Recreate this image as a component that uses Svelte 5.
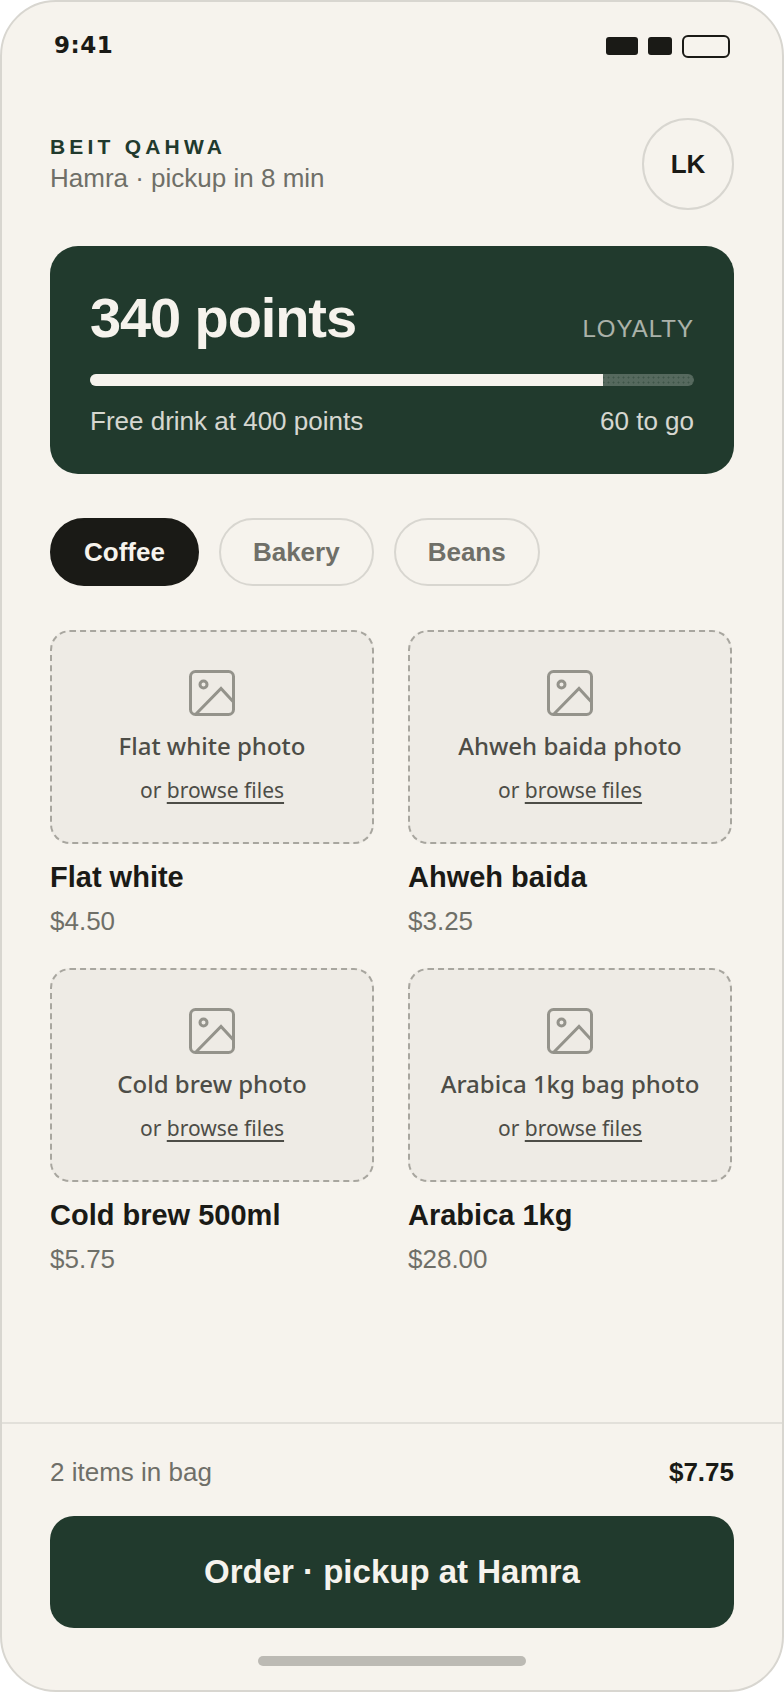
<script lang="ts">
  const tabs = ["Coffee", "Bakery", "Beans"];
  const items = [
    { name: "Flat white", price: "$4.50", photo: "Flat white photo" },
    { name: "Ahweh baida", price: "$3.25", photo: "Ahweh baida photo" },
    { name: "Cold brew 500ml", price: "$5.75", photo: "Cold brew photo" },
    { name: "Arabica 1kg", price: "$28.00", photo: "Arabica 1kg bag photo" },
  ];
  let active = $state("Coffee");
</script>

<div class="phone">
  <div class="status">
    <span class="time">9:41</span>
    <div class="signals">
      <span class="sig wide"></span>
      <span class="sig"></span>
      <span class="battery"></span>
    </div>
  </div>

  <header class="top">
    <div>
      <div class="brand">BEIT QAHWA</div>
      <div class="where">Hamra · pickup in 8 min</div>
    </div>
    <div class="avatar">LK</div>
  </header>

  <section class="loyalty">
    <div class="loyalty-head">
      <span class="points">340 points</span>
      <span class="tag">LOYALTY</span>
    </div>
    <div class="track"><div class="fill" style="width: {(340 / 400) * 100}%"></div></div>
    <div class="loyalty-foot">
      <span>Free drink at 400 points</span>
      <span>60 to go</span>
    </div>
  </section>

  <nav class="tabs">
    {#each tabs as tab}
      <button class="tab" class:active={active === tab} onclick={() => (active = tab)}>{tab}</button>
    {/each}
  </nav>

  <div class="grid">
    {#each items as item}
      <article class="item">
        <div class="drop">
          <svg class="drop-icon" viewBox="0 0 46 46" fill="none" stroke="currentColor" stroke-width="3" aria-hidden="true">
            <rect x="1.5" y="1.5" width="43" height="43" rx="5" />
            <circle cx="14.5" cy="14.5" r="3.5" />
            <path d="M44.5 32 32 18.5 6.5 44.5" />
          </svg>
          <div class="drop-label">{item.photo}</div>
          <div class="drop-sub">or <span class="browse">browse files</span></div>
        </div>
        <div class="item-name">{item.name}</div>
        <div class="item-price">{item.price}</div>
      </article>
    {/each}
  </div>

  <footer class="bag">
    <div class="bag-row">
      <span class="bag-count">2 items in bag</span>
      <span class="bag-total">$7.75</span>
    </div>
    <button class="order">Order · pickup at Hamra</button>
    <div class="home"></div>
  </footer>
</div>

<style>
  :global(body) {
    margin: 0;
    background: #fff;
  }

  .phone {
    box-sizing: border-box;
    width: 784px;
    height: 1692px;
    display: flex;
    flex-direction: column;
    background: #f6f3ed;
    border: 2px solid #d8d6d0;
    border-radius: 56px;
    overflow: hidden;
    font-family: "Liberation Sans", Arial, sans-serif;
    color: #1a1a16;
  }

  .status {
    display: flex;
    justify-content: space-between;
    align-items: center;
    height: 24px;
    padding: 32px 52px 0;
  }

  .time {
    font-size: 25px;
    font-weight: 700;
    letter-spacing: 0.5px;
    font-family: "DejaVu Sans", sans-serif;
    font-size: 23px;
    margin-top: -2px;
  }

  .signals {
    display: flex;
    align-items: center;
    gap: 10px;
  }

  .sig {
    width: 24px;
    height: 18px;
    border-radius: 3px;
    background: #1a1a16;
  }

  .sig.wide {
    width: 32px;
  }

  .battery {
    box-sizing: border-box;
    width: 48px;
    height: 23px;
    border: 2px solid #1a1a16;
    border-radius: 6px;
  }

  .top {
    display: flex;
    justify-content: space-between;
    align-items: center;
    padding: 60px 48px 0;
  }

  .brand {
    font-size: 21px;
    font-weight: 700;
    letter-spacing: 4.2px;
    color: #213a2d;
    line-height: 28px;
  }

  .where {
    font-size: 26px;
    color: #6f6f68;
    line-height: 34px;
  }

  .avatar {
    box-sizing: border-box;
    width: 92px;
    height: 92px;
    display: flex;
    align-items: center;
    justify-content: center;
    border: 2px solid #d8d6d0;
    border-radius: 50%;
    font-size: 26px;
    font-weight: 700;
  }

  .loyalty {
    margin: 36px 48px 0;
    padding: 40px 40px 36px;
    background: #213a2d;
    border-radius: 28px;
    color: #f6f3ed;
  }

  .loyalty-head {
    display: flex;
    justify-content: space-between;
    align-items: baseline;
  }

  .points {
    font-size: 56px;
    font-weight: 700;
    letter-spacing: -1.1px;
    line-height: 64px;
  }

  .tag {
    font-size: 24px;
    letter-spacing: 1px;
    opacity: 0.65;
  }

  .track {
    height: 12px;
    margin-top: 24px;
    border-radius: 6px;
    overflow: hidden;
    background-color: #56695e;
    background-image: radial-gradient(circle, #3f5649 0.9px, transparent 1.1px);
    background-size: 5px 5px;
    background-position: 1px 1px;
  }

  .fill {
    height: 100%;
    background: #f6f3ed;
  }

  .loyalty-foot {
    display: flex;
    justify-content: space-between;
    margin-top: 18px;
    font-size: 26px;
    line-height: 34px;
    opacity: 0.85;
  }

  .tabs {
    display: flex;
    gap: 20px;
    margin: 44px 48px 0;
  }

  .tab {
    box-sizing: border-box;
    height: 68px;
    padding: 0 32px;
    border: 2px solid #d8d6d0;
    border-radius: 34px;
    background: none;
    color: #6f6f68;
    font: 700 26px "Liberation Sans", Arial, sans-serif;
  }

  .tab.active {
    background: #1a1a16;
    border-color: #1a1a16;
    color: #f6f3ed;
  }

  .grid {
    display: grid;
    grid-template-columns: 324px 324px;
    gap: 30px 34px;
    margin: 44px 48px 0;
  }

  .drop {
    box-sizing: border-box;
    height: 214px;
    padding: 24px;
    display: flex;
    flex-direction: column;
    align-items: center;
    justify-content: center;
    gap: 13px;
    background: #eeebe5;
    border: 2px dashed #a8a69f;
    border-radius: 20px;
    text-align: center;
  }

  .drop-icon {
    width: 46px;
    height: 46px;
    flex: 0 1 46px;
    min-height: 0;
    color: #94938b;
  }

  .drop-label {
    flex: none;
    font-family: "Noto Sans", sans-serif;
    font-size: 24px;
    font-weight: 500;
    line-height: 34px;
    color: #4d4d47;
  }

  .drop-sub {
    flex: none;
    font-family: "Noto Sans", sans-serif;
    font-size: 21px;
    line-height: 28px;
    color: #4d4d47;
  }

  .browse {
    text-decoration: underline;
    text-underline-offset: 4px;
  }

  .item-name {
    margin-top: 14px;
    font-size: 29px;
    font-weight: 700;
    line-height: 38px;
  }

  .item-price {
    margin-top: 8px;
    font-size: 26px;
    line-height: 34px;
    color: #6f6f68;
  }

  .bag {
    margin-top: auto;
    padding: 28px 48px 0;
    border-top: 2px solid #e2e0da;
  }

  .bag-row {
    display: flex;
    justify-content: space-between;
    align-items: center;
    height: 40px;
    font-size: 26px;
  }

  .bag-count {
    color: #6f6f68;
  }

  .bag-total {
    font-weight: 700;
  }

  .order {
    display: block;
    width: 100%;
    height: 112px;
    margin-top: 24px;
    border: none;
    border-radius: 24px;
    background: #213a2d;
    color: #f6f3ed;
    font: 700 33px "Liberation Sans", Arial, sans-serif;
  }

  .home {
    width: 268px;
    height: 10px;
    margin: 28px auto 24px;
    border-radius: 5px;
    background: #bcbab4;
  }
</style>
